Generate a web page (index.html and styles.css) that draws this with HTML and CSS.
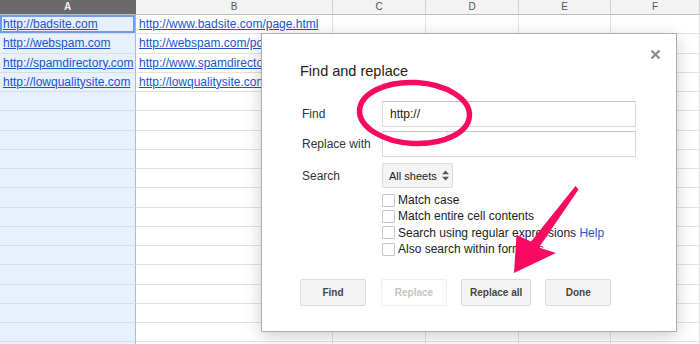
FILE: index.html
```html
<!DOCTYPE html>
<html lang="en">
<head>
    <meta charset="UTF-8">
    <title>Find and replace</title>
    <link rel="stylesheet" href="styles.css">
</head>
<body>
    <div class="sheet" id="sheet">
        <div class="hd hd-active">A</div>
        <div class="hd">B</div>
        <div class="hd">C</div>
        <div class="hd">D</div>
        <div class="hd">E</div>
        <div class="hd">F</div>

        <div class="cell col-a current"><a href="#">http://badsite.com</a></div>
        <div class="cell"><a href="#">http://www.badsite.com/page.html</a></div>
        <div class="cell"></div><div class="cell"></div><div class="cell"></div><div class="cell"></div>

        <div class="cell col-a"><a href="#">http://webspam.com</a></div>
        <div class="cell"><a href="#">http://webspam.com/post.html</a></div>
        <div class="cell"></div><div class="cell"></div><div class="cell"></div><div class="cell"></div>

        <div class="cell col-a"><a href="#">http://spamdirectory.com</a></div>
        <div class="cell"><a href="#">http://www.spamdirectory.com/links</a></div>
        <div class="cell"></div><div class="cell"></div><div class="cell"></div><div class="cell"></div>

        <div class="cell col-a"><a href="#">http://lowqualitysite.com</a></div>
        <div class="cell"><a href="#">http://lowqualitysite.com/page</a></div>
        <div class="cell"></div><div class="cell"></div><div class="cell"></div><div class="cell"></div>
    </div>

    <div class="dialog">
        <svg class="close" width="11" height="11" viewBox="0 0 11 11">
            <path d="M1.5 1.5 L9.5 9.5 M9.5 1.5 L1.5 9.5" stroke="#8a8a8a" stroke-width="2.2" fill="none"/>
        </svg>
        <div class="title">Find and replace</div>

        <div class="form-row row-find">
            <label class="label">Find</label>
            <div class="input">http://</div>
        </div>
        <div class="form-row row-replace">
            <label class="label">Replace with</label>
            <div class="input"></div>
        </div>
        <div class="form-row row-search">
            <label class="label">Search</label>
            <div class="select">
                All sheets
                <svg width="7" height="11" viewBox="0 0 7 11">
                    <path d="M0 4.2 L3.5 0.5 L7 4.2 Z M0 6.8 L3.5 10.5 L7 6.8 Z" fill="#555"/>
                </svg>
            </div>
        </div>

        <div class="checks">
            <div class="check"><span class="box"></span>Match case</div>
            <div class="check"><span class="box"></span>Match entire cell contents</div>
            <div class="check"><span class="box"></span>Search using regular expressions&nbsp;<a href="#" class="help">Help</a></div>
            <div class="check"><span class="box"></span>Also search within formulas</div>
        </div>

        <div class="buttons">
            <button class="btn">Find</button>
            <button class="btn btn-disabled">Replace</button>
            <button class="btn">Replace all</button>
            <button class="btn">Done</button>
        </div>
    </div>

    <!-- hand-drawn annotation over the screenshot -->
    <svg class="marks" width="700" height="344" viewBox="0 0 700 344">
        <ellipse cx="414.5" cy="113" rx="55" ry="30.5" transform="rotate(3 414.5 113)"
                 fill="none" stroke="#f70a60" stroke-width="5.5"/>
        <polygon points="575.5,186 578.5,189.5 539,247.5 556,253 514,273 516.5,235 531,241.5" fill="#f70a60"/>
    </svg>

    <script>
        // fill the rest of the grid with empty rows
        const sheet = document.getElementById("sheet");
        for (let r = 0; r < 14; r++) {
            for (let c = 0; c < 6; c++) {
                const cell = document.createElement("div");
                cell.className = c === 0 ? "cell col-a" : "cell";
                sheet.appendChild(cell);
            }
        }
    </script>
</body>
</html>
```

FILE: styles.css
```css
body {
    margin: 0;
    width: 700px;
    height: 344px;
    overflow: hidden;
    position: relative;
    background-color: #ffffff;
    font-family: "Liberation Sans", Arial, sans-serif;
}

.sheet {
    display: grid;
    grid-template-columns: 136px 197px 93px 93px 92px 89px;
    grid-template-rows: 15px;
    grid-auto-rows: 19.25px;
    height: 344px;
    overflow: hidden;
}

.hd {
    box-sizing: border-box;
    background-color: #f3f3f3;
    border-right: 1px solid #d0d0d0;
    border-bottom: 1px solid #bdbdbd;
    color: #555;
    font-size: 10px;
    line-height: 14px;
    text-align: center;
}

.hd-active {
    background-color: #6a6a6a;
    color: #f0f0f0;
    font-weight: bold;
    border-right-color: #6a6a6a;
}

.cell {
    box-sizing: border-box;
    border-right: 1px solid #e2e2e2;
    border-bottom: 1px solid #e2e2e2;
    padding: 0 3px;
    font-size: 12px;
    line-height: 18px;
    white-space: nowrap;
    overflow: hidden;
}

.cell a {
    color: #1a55cc;
    text-decoration: underline;
}

.col-a {
    background-color: #e9f0fd;
    border-right: 1px solid #9dbdf2;
    border-bottom-color: #d6dce8;
}

.current {
    box-shadow: inset 0 0 0 2px #6b9ef0;
}

.dialog {
    position: absolute;
    left: 261px;
    top: 33px;
    width: 416px;
    height: 299px;
    box-sizing: border-box;
    background-color: #ffffff;
    border: 1px solid #acacac;
    box-shadow: 0 4px 16px rgba(0, 0, 0, 0.2);
    padding: 29px 38px 0 38px;
    color: #333;
}

.close {
    position: absolute;
    right: 15px;
    top: 15px;
}

.title {
    font-size: 14.5px;
    line-height: 17px;
    color: #222;
}

.form-row {
    display: flex;
    align-items: center;
}

.row-find {
    margin-top: 21px;
}

.row-replace {
    margin-top: 4px;
}

.row-search {
    margin-top: 6px;
}

.label {
    width: 80px;
    padding-left: 2px;
    font-size: 12px;
    color: #333;
}

.input {
    box-sizing: border-box;
    width: 254px;
    height: 26px;
    border: 1px solid #d9d9d9;
    border-top-color: #c4c4c4;
    padding: 0 7px;
    font-size: 12px;
    line-height: 24px;
    color: #222;
}

.select {
    box-sizing: border-box;
    width: 71px;
    height: 25px;
    display: flex;
    align-items: center;
    gap: 5px;
    padding-left: 6px;
    background-color: #f4f4f4;
    border: 1px solid #dcdcdc;
    border-radius: 2px;
    font-size: 11px;
    color: #222;
}

.checks {
    margin: 4px 0 0 82px;
}

.check {
    display: flex;
    align-items: center;
    height: 16.33px;
    font-size: 12px;
    color: #222;
    white-space: nowrap;
}

.box {
    box-sizing: border-box;
    width: 13px;
    height: 13px;
    border: 1px solid #c6c6c6;
    border-radius: 1px;
    background-color: #ffffff;
    margin-right: 3px;
}

.help {
    color: #1a55cc;
    text-decoration: none;
}

.buttons {
    display: flex;
    gap: 14px;
    margin-top: 22px;
}

.btn {
    box-sizing: border-box;
    min-width: 66px;
    height: 27px;
    padding: 0 8px;
    background-color: #f4f4f4;
    border: 1px solid #dcdcdc;
    border-radius: 2px;
    font-family: "Liberation Sans", Arial, sans-serif;
    font-size: 10px;
    font-weight: bold;
    color: #444;
}

.btn-disabled {
    background-color: #ffffff;
    border-color: #efefef;
    color: #c4c4c4;
    margin-left: 1px;
}

.marks {
    position: absolute;
    left: 0;
    top: 0;
    pointer-events: none;
}
```
